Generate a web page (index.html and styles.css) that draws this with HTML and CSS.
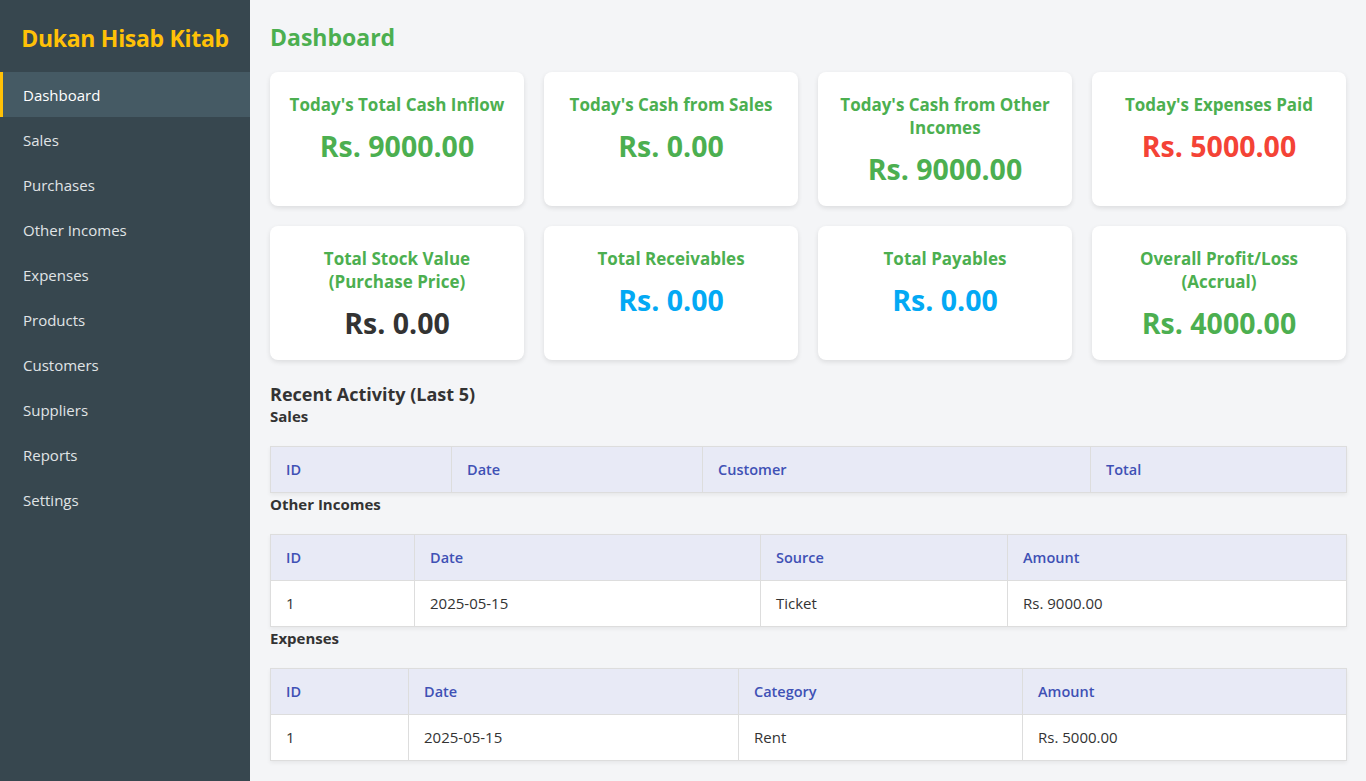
FILE: index.html
```html
<!DOCTYPE html>
<html lang="en">
<head>
<meta charset="utf-8">
<title>Dukan Hisab Kitab</title>
<link rel="stylesheet" href="styles.css">
</head>
<body>
<div class="app">
  <aside class="sidebar">
    <div class="brand">Dukan Hisab Kitab</div>
    <nav class="nav">
      <a class="nav-item active">Dashboard</a>
      <a class="nav-item">Sales</a>
      <a class="nav-item">Purchases</a>
      <a class="nav-item">Other Incomes</a>
      <a class="nav-item">Expenses</a>
      <a class="nav-item">Products</a>
      <a class="nav-item">Customers</a>
      <a class="nav-item">Suppliers</a>
      <a class="nav-item">Reports</a>
      <a class="nav-item">Settings</a>
    </nav>
  </aside>
  <main class="main">
    <h1 class="page-title">Dashboard</h1>
    <section class="cards">
      <div class="card"><div class="card-title">Today's Total Cash Inflow</div><div class="card-value green">Rs. 9000.00</div></div>
      <div class="card"><div class="card-title">Today's Cash from Sales</div><div class="card-value green">Rs. 0.00</div></div>
      <div class="card"><div class="card-title">Today's Cash from Other Incomes</div><div class="card-value green">Rs. 9000.00</div></div>
      <div class="card"><div class="card-title">Today's Expenses Paid</div><div class="card-value red">Rs. 5000.00</div></div>
      <div class="card"><div class="card-title">Total Stock Value<br>(Purchase Price)</div><div class="card-value dark">Rs. 0.00</div></div>
      <div class="card"><div class="card-title">Total Receivables</div><div class="card-value blue">Rs. 0.00</div></div>
      <div class="card"><div class="card-title">Total Payables</div><div class="card-value blue">Rs. 0.00</div></div>
      <div class="card"><div class="card-title">Overall Profit/Loss<br>(Accrual)</div><div class="card-value green">Rs. 4000.00</div></div>
    </section>

    <h3 class="section-title">Recent Activity (Last 5)</h3>
    <h4 class="sub-title">Sales</h4>
    <table class="data-table">
      <thead><tr><th class="s1">ID</th><th class="s2">Date</th><th class="s3">Customer</th><th class="s4">Total</th></tr></thead>
      <tbody></tbody>
    </table>

    <h4 class="sub-title">Other Incomes</h4>
    <table class="data-table">
      <thead><tr><th class="o1">ID</th><th class="o2">Date</th><th class="o3">Source</th><th class="o4">Amount</th></tr></thead>
      <tbody><tr><td>1</td><td>2025-05-15</td><td>Ticket</td><td>Rs. 9000.00</td></tr></tbody>
    </table>

    <h4 class="sub-title">Expenses</h4>
    <table class="data-table">
      <thead><tr><th class="e1">ID</th><th class="e2">Date</th><th class="e3">Category</th><th class="e4">Amount</th></tr></thead>
      <tbody><tr><td>1</td><td>2025-05-15</td><td>Rent</td><td>Rs. 5000.00</td></tr></tbody>
    </table>
  </main>
</div>
</body>
</html>
```
FILE: styles.css
```css
* { box-sizing: border-box; }
html, body { margin: 0; padding: 0; }
body {
  font-family: "Open Sans", "Noto Sans", "DejaVu Sans", sans-serif;
  background: #f4f5f7;
  color: #333;
}
.app { display: flex; min-height: 781px; }
.sidebar {
  width: 250px;
  flex: 0 0 250px;
  background: #37474f;
  color: #eceff1;
}
.brand {
  padding: 22px 10px 0;
  height: 72px;
  text-align: center;
  font-size: 23px;
  line-height: 32px;
  font-weight: 700;
  color: #ffc107;
  letter-spacing: -0.3px;
}
.nav { display: flex; flex-direction: column; }
.nav-item {
  display: block;
  padding: 13px 20px 11px;
  border-left: 3px solid transparent;
  font-size: 15px;
  line-height: 21px;
  color: #e0e4e6;
}
.nav-item.active {
  background: #455a64;
  border-left-color: #ffc107;
  color: #ffffff;
}
.main {
  flex: 1;
  padding: 22px 20px 20px;
  min-width: 0;
}
.page-title {
  margin: 0 0 20px;
  font-size: 23px;
  line-height: 30px;
  font-weight: 700;
  color: #4caf50;
}
.cards {
  display: grid;
  grid-template-columns: repeat(4, 1fr);
  gap: 20px;
}
.card {
  background: #fff;
  border-radius: 8px;
  box-shadow: 0 2px 5px rgba(0,0,0,0.1);
  padding: 21px 16px 19px;
  text-align: center;
}
.card-title {
  font-size: 17px;
  line-height: 23px;
  font-weight: 700;
  color: #4caf50;
  margin-bottom: 12px;
}
.card-value {
  font-size: 28.5px;
  line-height: 36px;
  font-weight: 700;
}
.green { color: #4caf50; }
.red { color: #f44336; }
.blue { color: #03a9f4; }
.dark { color: #333; }
.section-title {
  margin: 22px 0 0;
  font-size: 18px;
  line-height: 24px;
  font-weight: 700;
  color: #333;
}
.sub-title {
  margin: 1px 0 20px;
  font-size: 15px;
  line-height: 20px;
  font-weight: 700;
  color: #333;
}
.section-title + .sub-title { margin-top: 0; }
.data-table {
  width: 100%;
  border-collapse: collapse;
  table-layout: fixed;
  background: #fff;
  box-shadow: 0 2px 4px rgba(0,0,0,0.06);
  font-size: 15px;
}
.data-table th, .data-table td {
  border: 1px solid #ddd;
  padding: 12px 15px;
  line-height: 21px;
  text-align: left;
}
.data-table th {
  background: #e8eaf6;
  color: #3f51b5;
  font-weight: 600;
  font-size: 14.5px;
}
.data-table td { color: #333; }
.s1 { width: 181px; } .s2 { width: 251px; } .s3 { width: 388px; } .s4 { width: 256px; }
.o1 { width: 144px; } .o2 { width: 346px; } .o3 { width: 247px; } .o4 { width: 339px; }
.e1 { width: 138px; } .e2 { width: 330px; } .e3 { width: 284px; } .e4 { width: 324px; }
```
